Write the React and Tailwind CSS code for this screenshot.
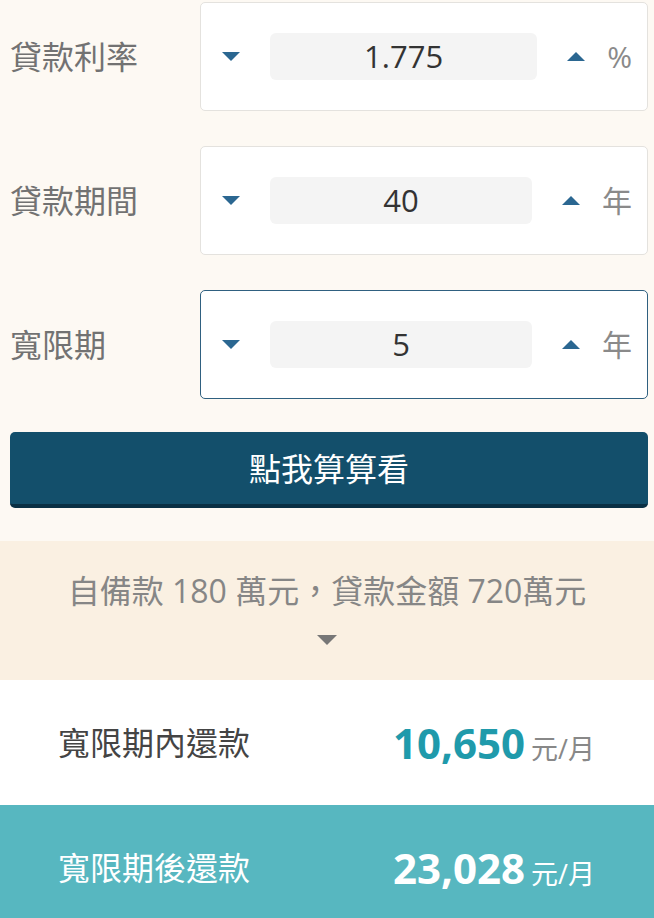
export default function App() {
  const font = { fontFamily: "'Open Sans', 'Noto Sans CJK TC', sans-serif" };
  const rows = [
    { label: "貸款利率", value: "1.775", unit: "%", focused: false },
    { label: "貸款期間", value: "40", unit: "年", focused: false },
    { label: "寬限期", value: "5", unit: "年", focused: true },
  ];
  return (
    <div className="w-[654px] h-[918px] overflow-hidden bg-white" style={font}>
      <div className="bg-[#fdf9f3] pt-[2px] pb-[33px] pl-[10px] pr-[6px]">
        <div className="flex flex-col gap-[35px]">
          {rows.map((r) => (
            <div key={r.label} className="flex items-center">
              <div className="w-[190px] text-[32px] leading-none text-[#727272]">{r.label}</div>
              <div
                className={
                  "flex h-[109px] flex-1 items-center rounded-[5px] border bg-white pl-[21px] pr-[15px] " +
                  (r.focused ? "border-[#2f6080]" : "border-[#e4e2de]")
                }
              >
                <div className="h-0 w-0 border-l-[9px] border-r-[9px] border-t-[9px] border-l-transparent border-r-transparent border-t-[#2b6791]" />
                <div className="mx-[30px] flex h-[47px] flex-1 items-center justify-center rounded-[6px] bg-[#f4f4f4] text-[31px] leading-none text-[#333]">
                  {r.value}
                </div>
                <div className="h-0 w-0 border-b-[9px] border-l-[9px] border-r-[9px] border-b-[#2b6791] border-l-transparent border-r-transparent" />
                <div className="ml-[22px] text-[30px] leading-none text-[#8a8a8a]">{r.unit}</div>
              </div>
            </div>
          ))}
        </div>
        <button className="mt-[33px] flex h-[76px] w-full items-center justify-center rounded-[5px] border-b-4 border-[#0a3044] bg-[#134f6b] pt-[2px] text-[32px] leading-none text-white">
          點我算算看
        </button>
      </div>
      <div className="flex h-[139px] flex-col items-center bg-[#faf0e2] pt-[34px]">
        <div className="text-[32px] leading-none text-[#868686]">自備款 180 萬元，貸款金額 720萬元</div>
        <div className="mt-[28px] h-0 w-0 border-l-[10px] border-r-[10px] border-t-[10px] border-l-transparent border-r-transparent border-t-[#777]" />
      </div>
      <div className="flex h-[125px] items-center bg-white pl-[58px]">
        <div className="w-[335px] text-[32px] leading-none text-[#444]">寬限期內還款</div>
        <div className="flex items-baseline">
          <span className="text-[42px] font-bold leading-none text-[#1f9aab]">10,650</span>
          <span className="ml-[6px] text-[27px] leading-none text-[#888]">元/月</span>
        </div>
      </div>
      <div className="flex h-[125px] items-center bg-[#57b7c0] pl-[58px]">
        <div className="w-[335px] text-[32px] leading-none text-white">寬限期後還款</div>
        <div className="flex items-baseline">
          <span className="text-[42px] font-bold leading-none text-white">23,028</span>
          <span className="ml-[6px] text-[27px] leading-none text-white">元/月</span>
        </div>
      </div>
    </div>
  );
}
